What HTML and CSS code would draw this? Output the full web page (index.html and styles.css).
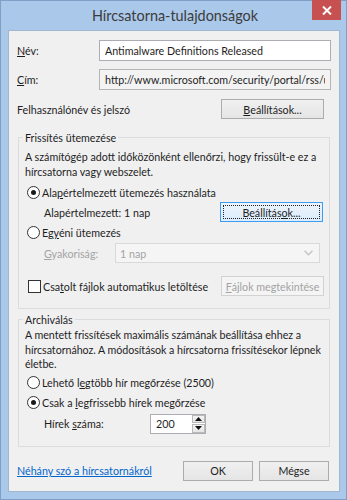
FILE: index.html
```html
<!DOCTYPE html>
<html lang="hu">
<head>
<meta charset="utf-8">
<title>Hírcsatorna-tulajdonságok</title>
<link rel="stylesheet" href="styles.css">
</head>
<body>
<div class="window">
  <div class="titlebar">
    <div class="title">Hírcsatorna-tulajdonságok</div>
    <div class="close"><svg width="10" height="9" viewBox="0 0 10 9"><path d="M1 0.5 L9 8.5 M9 0.5 L1 8.5" stroke="#fff" stroke-width="2"/></svg></div>
  </div>
  <div class="client">
    <div class="row field-row">
      <label class="lbl"><u>N</u>év:</label>
      <input class="textbox" type="text" value="Antimalware Definitions Released">
    </div>
    <div class="row field-row gap8">
      <label class="lbl"><u>C</u>ím:</label>
      <input class="textbox readonly" type="text" readonly value="http://www.microsoft.com/security/portal/rss/updates.xml">
    </div>
    <div class="row cred-row">
      <span class="grow">Felhasználónév és jelszó</span>
      <button class="btn wide"><u>B</u>eállítások...</button>
    </div>

    <fieldset class="group group1">
      <legend>Frissítés ütemezése</legend>
      <p class="desc">A számítógép adott időközönként ellenőrzi, hogy frissült-e ez a hírcsatorna vagy webszelet.</p>
      <div class="row opt-row first">
        <span class="radio checked"></span><span>Ala<u>p</u>értelmezett ütemezés használata</span>
      </div>
      <div class="row sub-row">
        <span class="sub-label">Alapértelmezett: 1 nap</span>
        <button class="btn wide focused"><span class="focus-ring">Beállítás<u>o</u>k...</span></button>
      </div>
      <div class="row opt-row">
        <span class="radio"></span><span>Eg<u>y</u>éni ütemezés</span>
      </div>
      <div class="row sub-row freq-row">
        <span class="freq-label disabled"><u>G</u>yakoriság:</span>
        <div class="combo"><span>1 nap</span><svg class="chev" width="9" height="6" viewBox="0 0 9 6"><path d="M0.5 0.8 L4.5 4.8 L8.5 0.8" fill="none" stroke="#c4c4c4" stroke-width="1.4"/></svg></div>
      </div>
      <div class="row check-row">
        <span class="check"></span><span class="grow">Csa<u>t</u>olt fájlok automatikus letöltése</span>
        <button class="btn wide disabled-btn" disabled><u>F</u>ájlok megtekintése</button>
      </div>
    </fieldset>

    <fieldset class="group group2">
      <legend>Archiválás</legend>
      <p class="desc">A mentett frissítések maximális számának beállítása ehhez a hírcsatornához. A módosítások a hírcsatorna frissítésekor lépnek életbe.</p>
      <div class="row opt-row first2">
        <span class="radio"></span><span>Lehető l<u>e</u>gtöbb hír megőrzése (2500)</span>
      </div>
      <div class="row opt-row">
        <span class="radio checked"></span><span>Csak a <u>l</u>egfrissebb hírek megőrzése</span>
      </div>
      <div class="row sub-row count-row">
        <span class="count-label">Hírek <u>s</u>záma:</span>
        <div class="spin">
          <span class="spin-val">200</span>
          <div class="spin-btns">
            <span class="spin-btn"><svg width="7" height="4" viewBox="0 0 7 4"><path d="M3.5 0 L7 4 L0 4 Z" fill="#111"/></svg></span>
            <span class="spin-btn"><svg width="7" height="4" viewBox="0 0 7 4"><path d="M0 0 L7 0 L3.5 4 Z" fill="#111"/></svg></span>
          </div>
        </div>
      </div>
    </fieldset>

    <div class="row footer">
      <a class="link grow" href="#">Néhány szó a hírcsatornákról</a>
      <button class="btn std">OK</button>
      <button class="btn std">Mégse</button>
    </div>
  </div>
</div>
</body>
</html>
```
FILE: styles.css
```css
html, body {
  margin: 0;
  padding: 0;
  background: #aac8ea;
}
body {
  font-family: "Lato", "Liberation Sans", sans-serif;
  font-size: 10.7px;
  color: #1e1e1e;
}
u { text-decoration: underline; text-underline-offset: 1px; }

.window {
  box-sizing: border-box;
  width: 347px;
  height: 500px;
  border: 1px solid #7f9fc6;
  background: #aac8ea;
  padding: 0 6px 7px 7px;
  display: flex;
  flex-direction: column;
}
.titlebar {
  height: 29px;
  flex: none;
  display: flex;
  align-items: flex-start;
  position: relative;
}
.title {
  flex: 1;
  text-align: center;
  font-size: 14.4px;
  color: #3b3b3b;
  line-height: 29px;
  padding-left: 2px;
}
.close {
  position: absolute;
  right: -1px;
  top: -1px;
  width: 29px;
  height: 20px;
  background: #c75050;
  display: flex;
  align-items: center;
  justify-content: center;
}

.client {
  flex: 1;
  background: #f0f0f0;
  border: 1px solid #a3b6cf;
  padding: 9px 8px 0 8px;
  display: flex;
  flex-direction: column;
}

.row { display: flex; align-items: center; }
.grow { flex: 1; }

.field-row { height: 21px; }
.gap8 { margin-top: 8px; }
.lbl { width: 82px; flex: none; }
.textbox {
  box-sizing: border-box;
  flex: 1;
  height: 21px;
  border: 1px solid #abadb3;
  background: #fff;
  font: inherit;
  color: #1e1e1e;
  padding: 0 5px;
  margin: 0;
  outline: none;
  min-width: 0;
}
.textbox.readonly { background: #f3f3f3; border-color: #b5b5b5; }

.cred-row { margin-top: 9px; height: 20px; padding-right: 7px; }

.btn {
  box-sizing: border-box;
  height: 20px;
  border: 1px solid #acacac;
  background: linear-gradient(#f0f0f0, #e5e5e5);
  font: inherit;
  color: #1e1e1e;
  padding: 0;
  margin: 0;
  display: flex;
  align-items: center;
  justify-content: center;
}
.btn.wide { width: 103px; }
.btn.focused { border-color: #3c9df5; background: linear-gradient(#ecf4fc, #dcecfc); padding: 2px; }
.focus-ring {
  flex: 1;
  align-self: stretch;
  display: flex;
  align-items: center;
  justify-content: center;
  border: 1px dotted #222;
}
.disabled-btn {
  color: #a3a3a3;
  border-color: #d2d2d2;
  background: #f4f4f4;
}

.group {
  margin: 0 1px;
  border: 1px solid #dcdcdc;
  border-radius: 0;
  padding: 0 5px 0 6px;
  min-width: 0;
}
.group legend {
  padding: 0 2px;
  margin-left: -2px;
  line-height: 15px;
  color: #1e1e1e;
}
.group1 { margin-top: 11px; padding-bottom: 12px; }
.group2 { margin-top: 3px; padding-bottom: 12px; }

.desc {
  margin: 4px 0 0 0;
  line-height: 15px;
  padding-right: 6px;
}
.group2 .desc { margin-top: 1px; line-height: 14.5px; padding-right: 0; letter-spacing: -0.05px; }

.opt-row { height: 20px; padding-left: 2px; }
.opt-row.first { margin-top: 3px; }
.opt-row.first2 { margin-top: 1px; }
.radio {
  box-sizing: border-box;
  width: 13px;
  height: 13px;
  border: 1px solid #333;
  border-radius: 50%;
  background: #fff;
  margin-right: 2px;
  flex: none;
  display: flex;
  align-items: center;
  justify-content: center;
}
.radio.checked::after {
  content: "";
  width: 5px;
  height: 5px;
  border-radius: 50%;
  background: #1a1a1a;
}

.sub-row { height: 20px; padding-left: 19px; }
.sub-label { width: 176px; flex: none; }
.freq-row { margin-top: 1px; }
.freq-label { width: 71px; flex: none; }
.disabled { color: #a3a3a3; }
.combo {
  box-sizing: border-box;
  width: 205px;
  height: 20px;
  border: 1px solid #d9d9d9;
  background: #f5f5f5;
  color: #a3a3a3;
  display: flex;
  align-items: center;
  justify-content: space-between;
  padding: 0 6px 0 4px;
}

.check-row { margin-top: 13px; height: 20px; padding-left: 3px; }
.check {
  box-sizing: border-box;
  width: 13px;
  height: 13px;
  border: 1px solid #333;
  background: #fff;
  margin-right: 2px;
  flex: none;
}

.count-row { margin-top: 1px; }
.count-label { width: 106px; flex: none; }
.spin {
  box-sizing: border-box;
  width: 56px;
  height: 20px;
  border: 1px solid #abadb3;
  background: #fff;
  display: flex;
}
.spin-val { flex: 1; padding-left: 5px; line-height: 18px; }
.spin-btns {
  width: 13px;
  display: flex;
  flex-direction: column;
  gap: 1px;
  padding: 0 0 0 0;
}
.spin-btn {
  flex: 1;
  border: 1px solid #b9b9b9;
  background: linear-gradient(#f3f3f3, #e6e6e6);
  display: flex;
  align-items: center;
  justify-content: center;
}

.footer { margin-top: 14px; height: 20px; padding-right: 2px; }
.link { color: #0066cc; text-decoration: underline; }
.btn.std { width: 70px; margin-left: 6px; }
```
